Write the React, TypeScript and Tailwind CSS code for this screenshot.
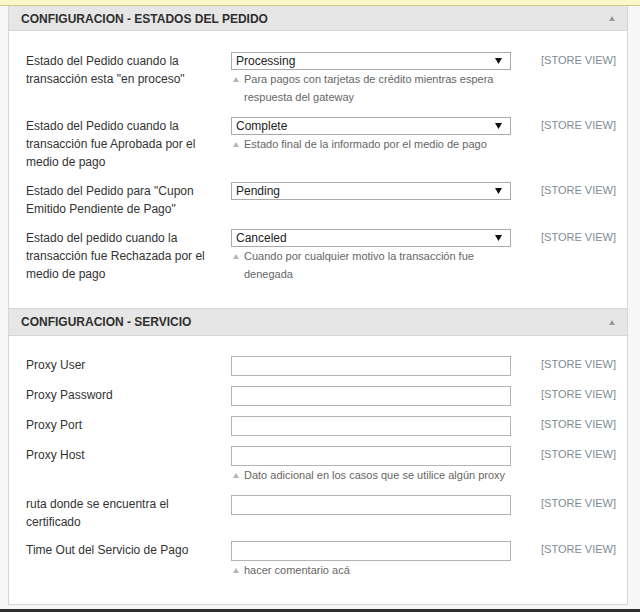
import React from 'react';

type Field = {
  label: string;
  kind: 'select' | 'text';
  value?: string;
  note?: string;
};

const ESTADOS: Field[] = [
  {
    label: 'Estado del Pedido cuando la transacción esta "en proceso"',
    kind: 'select',
    value: 'Processing',
    note: 'Para pagos con tarjetas de crédito mientras espera respuesta del gateway',
  },
  {
    label: 'Estado del Pedido cuando la transacción fue Aprobada por el medio de pago',
    kind: 'select',
    value: 'Complete',
    note: 'Estado final de la informado por el medio de pago',
  },
  {
    label: 'Estado del Pedido para "Cupon Emitido Pendiente de Pago"',
    kind: 'select',
    value: 'Pending',
  },
  {
    label: 'Estado del pedido cuando la transacción fue Rechazada por el medio de pago',
    kind: 'select',
    value: 'Canceled',
    note: 'Cuando por cualquier motivo la transacción fue denegada',
  },
];

const SERVICIO: Field[] = [
  { label: 'Proxy User', kind: 'text' },
  { label: 'Proxy Password', kind: 'text' },
  { label: 'Proxy Port', kind: 'text' },
  { label: 'Proxy Host', kind: 'text', note: 'Dato adicional en los casos que se utilice algún proxy' },
  { label: 'ruta donde se encuentra el certificado', kind: 'text' },
  { label: 'Time Out del Servicio de Pago', kind: 'text', note: 'hacer comentario acá' },
];

const UpTriangle: React.FC<{ className?: string; color: string }> = ({ className, color }) => (
  <svg className={className} viewBox="0 0 6 5" width="6" height="5">
    <polygon points="3,0 6,5 0,5" fill={color} />
  </svg>
);

const Note: React.FC<{ text: string }> = ({ text }) => (
  <p className="relative mt-px pl-[13px] text-[11px] leading-[17.5px] text-[#666]">
    <UpTriangle className="absolute left-[2px] top-[6px]" color="#b5b5b5" />
    {text}
  </p>
);

const FieldRow: React.FC<{ field: Field; labelPad: string }> = ({ field, labelPad }) => (
  <div className="flex items-start">
    <div className={`w-[205px] shrink-0 text-[12px] leading-[18px] text-[#333] ${labelPad}`}>{field.label}</div>
    <div className="w-[280px] shrink-0">
      {field.kind === 'select' ? (
        <div className="flex h-[18px] items-center justify-between border border-[#aaa] bg-white pl-[4px] pr-[8px] text-[12px] text-[#222]">
          <span>{field.value}</span>
          <svg viewBox="0 0 7 6" width="7" height="6">
            <polygon points="0,0 7,0 3.5,6" fill="#111" />
          </svg>
        </div>
      ) : (
        <input type="text" className="block h-5 w-full border border-[#b3b3b3] bg-white outline-none" />
      )}
      {field.note && <Note text={field.note} />}
    </div>
    <div className="ml-[30px] text-[11px] leading-[17px] text-[#7d8c94]">[STORE VIEW]</div>
  </div>
);

const SectionHead: React.FC<{ title: string; className: string }> = ({ title, className }) => (
  <div className={`flex items-center justify-between border-[#d6d6d6] bg-[#e6e6e6] px-3 ${className}`}>
    <h3 className="text-[12px] font-bold text-[#2f2f2f]">{title}</h3>
    <UpTriangle color="#9a9a9a" />
  </div>
);

export default function App() {
  return (
    <div className="flex h-[612px] flex-col bg-[#f7f7f7] font-['Liberation_Sans',Arial,sans-serif]">
      <div className="h-[6px] shrink-0 border-b border-[#d3c58e] bg-[#fcf7c6]" />
      <div className="ml-2 mr-3 border-x border-b border-[#d6d6d6] bg-white">
        <SectionHead title="CONFIGURACION - ESTADOS DEL PEDIDO" className="h-[25px] border-b pt-px" />
        <div className="flex flex-col gap-[11px] pb-[25px] pl-[17px] pt-[21px]">
          {ESTADOS.map((f, i) => (
            <FieldRow key={i} field={f} labelPad="pr-[15px]" />
          ))}
        </div>
        <SectionHead title="CONFIGURACION - SERVICIO" className="h-[28px] border-y" />
        <div className="flex flex-col gap-[10px] pb-[25px] pl-[17px] pt-[20px]">
          {SERVICIO.map((f, i) => (
            <FieldRow key={i} field={f} labelPad="pr-[40px]" />
          ))}
        </div>
      </div>
      <div className="mt-auto h-[3px] bg-[#2e2e2e]" />
    </div>
  );
}
